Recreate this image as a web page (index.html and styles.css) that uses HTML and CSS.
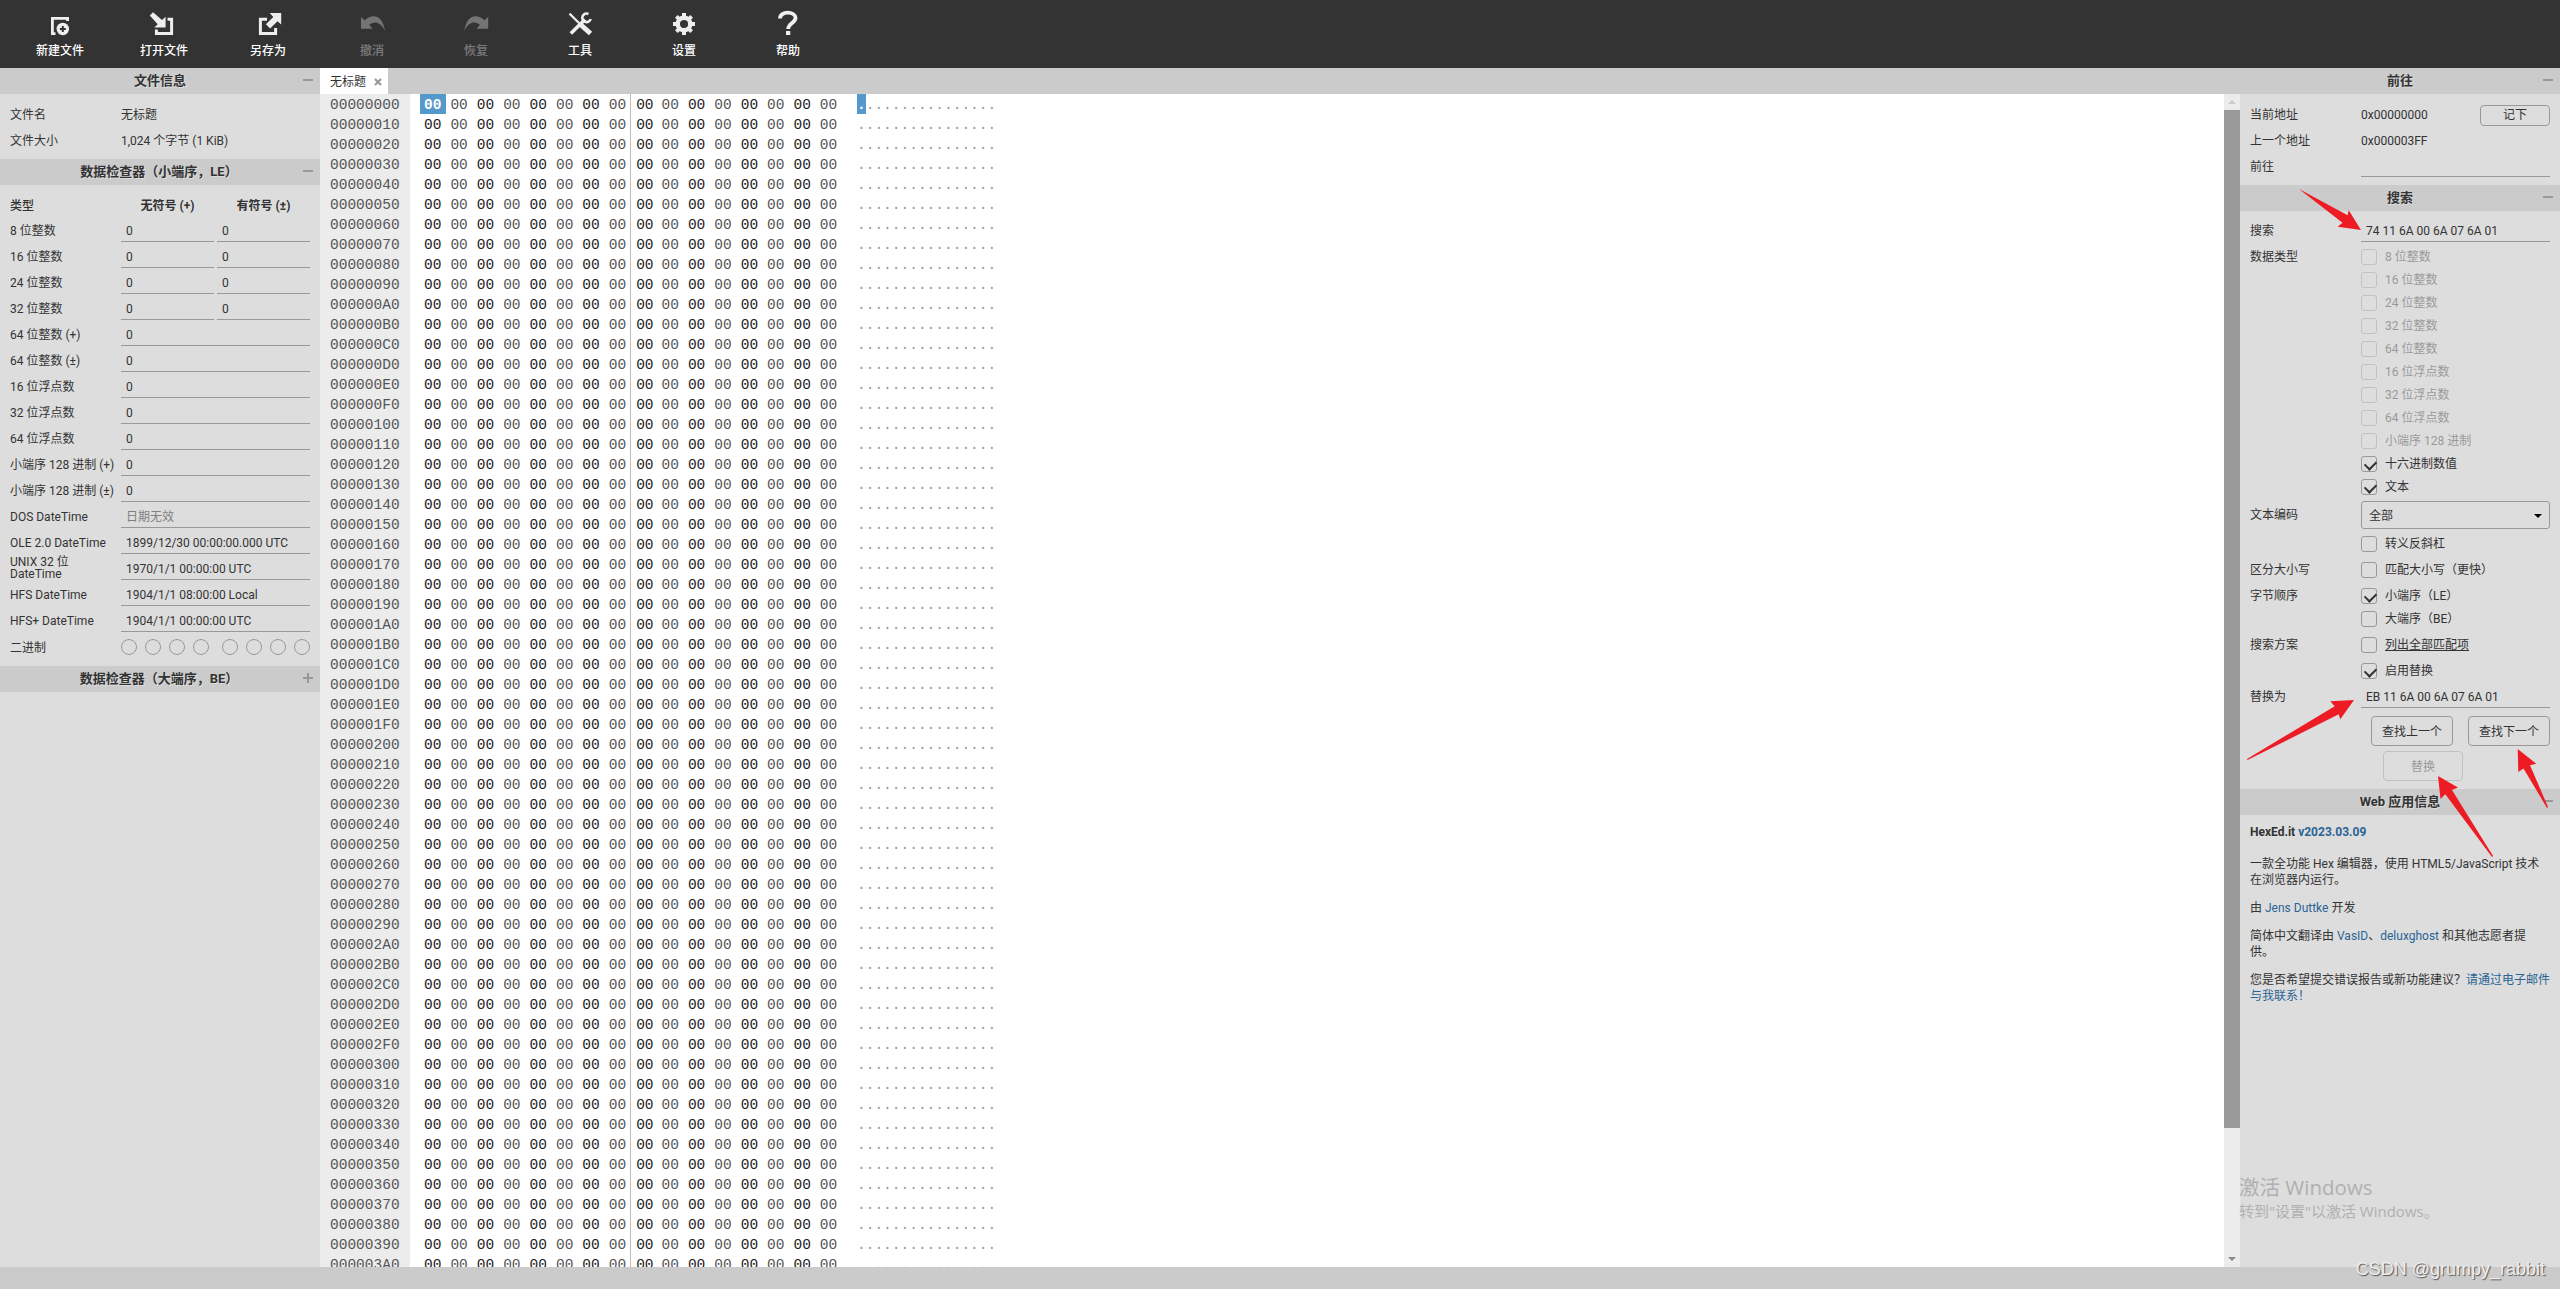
FILE: index.html
```html
<!DOCTYPE html>
<html lang="zh-CN">
    <head>
        <meta charset="UTF-8" />
        <meta name="viewport" content="width=device-width, initial-scale=1.0" />
        <title>HexEd.it</title>
        <link rel="stylesheet" href="styles.css">
    </head>
    <body>
        <div class="toolbar">
            <div class="tool">
                <svg viewBox="0 0 24 24"><path d="M7.5 21.6H4.4V6.4h15.2V9" fill="none" stroke="#eee" stroke-width="2.8"/><circle cx="14.8" cy="17" r="6.2" fill="#eee"/><path d="M14.8 14v6M11.8 17h6" stroke="#333" stroke-width="2"/></svg>
                <span>新建文件</span>
            </div>
            <div class="tool">
                <svg viewBox="0 0 24 24"><path d="M15.5 7.2h4.1v14.3H4.4V17.5" fill="none" stroke="#eee" stroke-width="3"/><path d="M-2.2 3.5 1 .3l9 7.6 3.6-3.2v10.8H2.3l3.4-3.2z" fill="#eee"/></svg>
                <span>打开文件</span>
            </div>
            <div class="tool">
                <svg viewBox="0 0 24 24"><path d="M11 7.2H4.4v14.3h15.2V16" fill="none" stroke="#eee" stroke-width="3"/><path d="M25.2 1v11.6l-3.7-3.4-7.4 7.2-4.2-4.2 7.4-7.2L13.7 1z" fill="#eee"/></svg>
                <span>另存为</span>
            </div>
            <div class="tool disabled">
                <svg viewBox="0 0 24 24"><path d="M1 5l3.7 3.3C12 1.5 22 2 25 18.7 20.5 10 15 8.5 9.3 12.7L12.5 16.7H1z" fill="#eee"/></svg>
                <span>撤消</span>
            </div>
            <div class="tool disabled">
                <svg viewBox="0 0 24 24"><path transform="translate(25.2) scale(-1 1)" d="M1 5l3.7 3.3C12 1.5 22 2 25 18.7 20.5 10 15 8.5 9.3 12.7L12.5 16.7H1z" fill="#eee"/></svg>
                <span>恢复</span>
            </div>
            <div class="tool">
                <svg viewBox="0 0 24 24"><path d="M1.5 1.6 12 12" stroke="#eee" stroke-width="2.2"/><path d="M13 13l9.5 8.5" stroke="#eee" stroke-width="5"/><path d="M2.8 21.5 17 7.5" stroke="#eee" stroke-width="3.6"/><path d="M20.5 2a4.3 4.3 0 1 0 2.2 5" fill="none" stroke="#eee" stroke-width="2.6"/></svg>
                <span>工具</span>
            </div>
            <div class="tool">
                <svg viewBox="0 0 24 24"><circle cx="12" cy="12" r="6.3" fill="none" stroke="#eee" stroke-width="4.4"/><g stroke="#eee" stroke-width="4"><path d="M12 1v3.5M12 19.5V23M1 12h3.5M19.5 12H23"/><path d="M4.4 4.4l2.3 2.3M17.3 17.3l2.3 2.3M4.4 19.6l2.3-2.3M17.3 6.7l2.3-2.3"/></g></svg>
                <span>设置</span>
            </div>
            <div class="tool">
                <svg viewBox="0 0 24 24"><path d="M4 6.5c0-8 15.5-7.5 15.5-.4 0 5-7.3 5-7.3 11" fill="none" stroke="#eee" stroke-width="3.8"/><path d="M10 19h4.3v4H10z" fill="#eee"/></svg>
                <span>帮助</span>
            </div>
        </div>

        <div class="main">
            <div class="panel left-panel">
                <div class="panel-header">文件信息<i class="toggle"></i></div>
                <div class="panel-body">
                    <div class="row"><label>文件名</label><span>无标题</span></div>
                    <div class="row"><label>文件大小</label><span>1,024 个字节 (1 KiB)</span></div>
                </div>
                <div class="panel-header inspector-header">数据检查器（小端序，LE）<i class="toggle"></i></div>
                <div class="panel-body inspector">
                    <div class="row head"><label>类型</label><b>无符号 (+)</b><b>有符号 (±)</b></div>
                    <div class="row"><label>8 位整数</label><div class="field">0</div><div class="field">0</div></div>
                    <div class="row"><label>16 位整数</label><div class="field">0</div><div class="field">0</div></div>
                    <div class="row"><label>24 位整数</label><div class="field">0</div><div class="field">0</div></div>
                    <div class="row"><label>32 位整数</label><div class="field">0</div><div class="field">0</div></div>
                    <div class="row"><label>64 位整数 (+)</label><div class="field">0</div></div>
                    <div class="row"><label>64 位整数 (±)</label><div class="field">0</div></div>
                    <div class="row"><label>16 位浮点数</label><div class="field">0</div></div>
                    <div class="row"><label>32 位浮点数</label><div class="field">0</div></div>
                    <div class="row"><label>64 位浮点数</label><div class="field">0</div></div>
                    <div class="row"><label>小端序 128 进制 (+)</label><div class="field">0</div></div>
                    <div class="row"><label>小端序 128 进制 (±)</label><div class="field">0</div></div>
                    <div class="row"><label>DOS DateTime</label><div class="field invalid">日期无效</div></div>
                    <div class="row"><label>OLE 2.0 DateTime</label><div class="field">1899/12/30 00:00:00.000 UTC</div></div>
                    <div class="row"><label class="two-lines">UNIX 32 位<br>DateTime</label><div class="field">1970/1/1 00:00:00 UTC</div></div>
                    <div class="row"><label>HFS DateTime</label><div class="field">1904/1/1 08:00:00 Local</div></div>
                    <div class="row"><label>HFS+ DateTime</label><div class="field">1904/1/1 00:00:00 UTC</div></div>
                    <div class="row bits-row"><label>二进制</label><div class="bits"><i></i><i></i><i></i><i></i><i></i><i></i><i></i><i></i></div></div>
                </div>
                <div class="panel-header inspector-header">数据检查器（大端序，BE）<i class="toggle plus"></i></div>
            </div>

            <div class="editor">
                <div class="tabs">
                    <div class="tab">无标题<svg viewBox="0 0 8 8"><path d="M1 1l6 6M7 1l-6 6" stroke="#999" stroke-width="2.2"/></svg></div>
                </div>
                <div class="editor-body">
                    <div class="hex-view">
                        <div class="addresses" id="addresses"></div>
                        <div class="bytes" id="bytes"></div>
                        <div class="ascii" id="ascii"></div>
                    </div>
                    <div class="scrollbar">
                        <div class="scroll-arrow up"></div>
                        <div class="scroll-thumb"></div>
                        <div class="scroll-arrow down"></div>
                    </div>
                </div>
            </div>

            <div class="panel right-panel">
                <div class="panel-header">前往<i class="toggle"></i></div>
                <div class="panel-body">
                    <div class="row"><label>当前地址</label><span>0x00000000</span><button class="small">记下</button></div>
                    <div class="row"><label>上一个地址</label><span>0x000003FF</span></div>
                    <div class="row goto"><label>前往</label><div class="field"></div></div>
                </div>
                <div class="panel-header">搜索<i class="toggle"></i></div>
                <div class="panel-body search">
                    <div class="row"><label>搜索</label><div class="field">74 11 6A 00 6A 07 6A 01</div></div>
                    <div class="group">
                        <label>数据类型</label>
                        <div class="checks">
                            <div class="check off"><i></i>8 位整数</div>
                            <div class="check off"><i></i>16 位整数</div>
                            <div class="check off"><i></i>24 位整数</div>
                            <div class="check off"><i></i>32 位整数</div>
                            <div class="check off"><i></i>64 位整数</div>
                            <div class="check off"><i></i>16 位浮点数</div>
                            <div class="check off"><i></i>32 位浮点数</div>
                            <div class="check off"><i></i>64 位浮点数</div>
                            <div class="check off"><i></i>小端序 128 进制</div>
                            <div class="check"><i class="checked"></i>十六进制数值</div>
                            <div class="check"><i class="checked"></i>文本</div>
                        </div>
                    </div>
                    <div class="group encoding">
                        <label>文本编码</label>
                        <div class="select">全部</div>
                    </div>
                    <div class="group">
                        <label></label>
                        <div class="checks"><div class="check"><i></i>转义反斜杠</div></div>
                    </div>
                    <div class="group">
                        <label>区分大小写</label>
                        <div class="checks"><div class="check"><i></i>匹配大小写（更快）</div></div>
                    </div>
                    <div class="group">
                        <label>字节顺序</label>
                        <div class="checks">
                            <div class="check"><i class="checked"></i>小端序（LE）</div>
                            <div class="check"><i></i>大端序（BE）</div>
                        </div>
                    </div>
                    <div class="group">
                        <label>搜索方案</label>
                        <div class="checks"><div class="check"><i></i><u>列出全部匹配项</u></div></div>
                    </div>
                    <div class="group">
                        <label></label>
                        <div class="checks"><div class="check"><i class="checked"></i>启用替换</div></div>
                    </div>
                    <div class="row replace-row"><label>替换为</label><div class="field">EB 11 6A 00 6A 07 6A 01</div></div>
                    <div class="buttons">
                        <button>查找上一个</button>
                        <button>查找下一个</button>
                    </div>
                    <div class="buttons replace"><button disabled>替换</button></div>
                </div>
                <div class="panel-header">Web 应用信息<i class="toggle"></i></div>
                <div class="about">
                    <p class="version">HexEd.it <a>v2023.03.09</a></p>
                    <p>一款全功能 Hex 编辑器，使用 HTML5/JavaScript 技术<br>在浏览器内运行。</p>
                    <p>由 <a>Jens Duttke</a> 开发</p>
                    <p>简体中文翻译由 <a>VasID</a>、<a>deluxghost</a> 和其他志愿者提<br>供。</p>
                    <p>您是否希望提交错误报告或新功能建议？<a>请通过电子邮件<br>与我联系！</a></p>
                </div>
            </div>
        </div>
        <div class="status-bar"></div>

        <svg class="arrows" viewBox="2240 180 320 690">
            <path d="M2299 189 2347.6 215.3 2348.7 210.3 2361 230 2337.7 226.7 2342.5 222.7z"/>
            <path d="M2247 759 2247.5 760 2338.7 714.3 2340.3 719.3 2354 700 2330.3 701.3 2334.7 706.3z"/>
            <path d="M2438 776 2458 787.5 2452 790 2493 856 2492 857 2445.3 794.2 2440.5 799z"/>
            <path d="M2517.7 749 2536.3 763.7 2530 765.3 2548 807 2547 808 2523.5 768.5 2518.3 772z"/>
        </svg>
        <div class="activate">
            <div>激活 Windows</div>
            <small>转到"设置"以激活 Windows。</small>
        </div>
        <div class="watermark">CSDN @grumpy_rabbit</div>
        <script src="script.js"></script>
    </body>
</html>
```

FILE: styles.css
```css
:root {
    --bar-color: #333;
    --header-color: #cbcbcb;
    --panel-color: #ddd;
    --text-color: #333;
    --line-color: #999;
    --link-color: #2a6496;
    --select-color: #5599cc;
}

* {
    box-sizing: border-box;
}

body {
    margin: 0;
    height: 1289px;
    display: flex;
    flex-direction: column;
    overflow: hidden;
    font-family: Roboto, "Noto Sans CJK SC", sans-serif;
    font-size: 12px;
    line-height: 16px;
    color: var(--text-color);
    background-color: var(--panel-color);
}

a {
    color: var(--link-color);
}

.toolbar {
    flex: none;
    height: 68px;
    padding-left: 8px;
    display: flex;
    background-color: var(--bar-color);
}

.tool {
    width: 104px;
    padding-top: 12px;
    display: flex;
    flex-direction: column;
    align-items: center;
    gap: 7px;
    color: white;
    font-weight: 500;
}

.tool svg {
    width: 24px;
    height: 24px;
    overflow: visible;
}

.tool.disabled {
    opacity: 0.35;
}

.main {
    height: 1199px;
    display: flex;
}

.panel {
    width: 320px;
    flex: none;
}

.panel-header {
    position: relative;
    height: 26px;
    line-height: 25px;
    text-align: center;
    font-size: 13px;
    font-weight: bold;
    background-color: var(--header-color);
    text-shadow: 1px 1px 0 #ddd;
}

.inspector-header {
    padding-right: 2px;
}

.toggle {
    position: absolute;
    right: 7px;
    top: 11px;
    width: 10px;
    height: 2px;
    background-color: var(--line-color);
}

.toggle.plus::after {
    content: "";
    position: absolute;
    left: 4px;
    top: -4px;
    width: 2px;
    height: 10px;
    background-color: var(--line-color);
}

.panel-body {
    padding: 8px 10px 5px;
}

.row {
    height: 26px;
    display: flex;
    align-items: center;
    gap: 3px;
}

.row label,
.group label {
    width: 108px;
    flex: none;
    white-space: nowrap;
}

.row b {
    flex: 1;
    text-align: center;
}

.field {
    flex: 1;
    height: 26px;
    padding: 0 5px;
    line-height: 26px;
    border-bottom: 1px solid var(--line-color);
}

.field.invalid {
    color: #808080;
}

.inspector .field,
.search .field {
    padding-top: 2px;
}

.inspector label,
.search .row label {
    padding-top: 3px;
}

.inspector label.two-lines {
    line-height: 12px;
    padding-top: 2px;
}

.inspector .head {
    height: 23px;
    padding-top: 2px;
}

.inspector .head label {
    font-weight: 500;
    padding-top: 0;
}

.inspector .bits-row {
    height: 29px;
}

.bits {
    flex: 1;
    display: flex;
    gap: 8px;
}

.bits i {
    width: 16px;
    height: 16px;
    border: 1px solid var(--line-color);
    border-radius: 50%;
}

.bits i:nth-child(5) {
    margin-left: 5px;
}

.editor {
    flex: 1;
    display: flex;
    flex-direction: column;
    min-width: 0;
}

.tabs {
    height: 26px;
    flex: none;
    background-color: var(--header-color);
}

.tab {
    width: 68px;
    height: 26px;
    padding: 1px 0 0 10px;
    display: flex;
    align-items: center;
    gap: 8px;
    background-color: white;
}

.tab svg {
    width: 8px;
    height: 8px;
}

.editor-body {
    flex: 1;
    display: flex;
    min-height: 0;
    background-color: white;
}

.hex-view {
    flex: 1;
    display: flex;
    overflow: hidden;
    font-family: "Liberation Mono", monospace;
    font-size: 14.5px;
    line-height: 22px;
}

.addresses {
    width: 90px;
    padding-left: 10px;
    flex: none;
    color: #555;
    background-color: #ececec;
}

.addresses div,
.ascii div {
    height: 20px;
}

.bytes {
    margin-left: 10px;
    width: 423px;
}

.byte-row {
    height: 20px;
    display: grid;
    grid-template-columns: repeat(16, 26.4px);
    grid-template-rows: 20px;
}

.byte-row span {
    padding-left: 4px;
    color: #222;
}

.byte-row span:nth-child(even) {
    color: #555;
}

.byte-row span:nth-child(9) {
    border-left: 1px solid #bbb;
    margin-left: -1px;
    padding-left: 5px;
}

.byte-row span.selected {
    width: 26px;
    color: white;
    font-weight: bold;
    background-color: var(--select-color);
}

.ascii {
    margin-left: 14px;
    color: #999;
    white-space: pre;
}

.ascii .selected {
    display: inline-block;
    height: 20px;
    vertical-align: top;
    color: white;
    font-weight: bold;
    background-color: var(--select-color);
}

.scrollbar {
    width: 16px;
    display: flex;
    flex-direction: column;
    background-color: #ececec;
}

.scroll-thumb {
    height: 1018px;
    background-color: #999;
}

.scroll-arrow {
    height: 16px;
    padding: 6px 4px 0;
}

.scroll-arrow::before {
    content: "";
    display: block;
    border: 4px solid transparent;
    border-top-width: 0;
    border-bottom-color: #ccc;
}

.scroll-arrow.down {
    margin-top: auto;
}

.scroll-arrow.down::before {
    border-top: 4px solid #888;
    border-bottom-width: 0;
}

.right-panel .row span {
    flex: 1;
}

.goto .field {
    align-self: flex-start;
    height: 23px;
}

button {
    width: 82px;
    height: 30px;
    padding: 1px 0 0;
    font: inherit;
    color: inherit;
    background: none;
    border: 1px solid var(--line-color);
    border-radius: 4px;
}

button.small {
    width: 70px;
    height: 21px;
    padding: 0;
}

button:disabled {
    width: 80px;
    opacity: 0.4;
}

.search {
    padding: 5px 10px 8px;
}

.group {
    display: flex;
    align-items: flex-start;
    gap: 3px;
    margin-top: 10px;
}

.search .row + .group {
    margin-top: 7px;
}

.checks {
    display: flex;
    flex-direction: column;
    gap: 7px;
}

.check {
    height: 16px;
    display: flex;
    gap: 8px;
    white-space: nowrap;
}

.check i {
    width: 16px;
    height: 16px;
    border: 1px solid var(--line-color);
    border-radius: 3px;
}

.check i.checked::after {
    content: "";
    display: block;
    width: 9px;
    height: 6px;
    margin: 3px 0 0 2.5px;
    border: solid var(--text-color);
    border-width: 0 0 2.5px 2.5px;
    transform: rotate(-45deg);
}

.check.off {
    opacity: 0.4;
}

.encoding {
    align-items: center;
    margin: 6px 0 -3px;
}

.select {
    flex: 1;
    height: 28px;
    padding: 1px 7px 0;
    display: flex;
    align-items: center;
    justify-content: space-between;
    border: 1px solid var(--line-color);
    border-radius: 3px;
}

.select::after {
    content: "";
    border: 4px solid transparent;
    border-top-color: black;
    border-bottom-width: 0;
}

.replace-row {
    margin-top: 3px;
}

.buttons {
    display: flex;
    justify-content: flex-end;
    gap: 15px;
    margin-top: 8px;
}

.buttons.replace {
    margin: 5px 87px 0 0;
}

.about {
    padding: 9px 0 0 10px;
    white-space: nowrap;
}

.about p {
    margin: 0 0 12px;
}

.about .version {
    font-weight: bold;
    margin-bottom: 16px;
}

.status-bar {
    height: 22px;
    background-color: var(--header-color);
}

/* annotations lie over the panels */
.arrows {
    position: absolute;
    left: 2240px;
    top: 180px;
    width: 320px;
    height: 690px;
    fill: #ed1c24;
}

.activate {
    position: absolute;
    left: 2239px;
    top: 1174px;
    font-family: "Open Sans", "Noto Sans CJK SC", sans-serif;
    font-size: 20.5px;
    line-height: 27px;
    color: #b0b0b0;
}

.activate small {
    display: block;
    font-size: 15px;
    line-height: 20px;
}

.watermark {
    position: absolute;
    right: 15px;
    top: 1257px;
    font-family: "Liberation Sans", sans-serif;
    font-size: 18px;
    line-height: 24px;
    color: #eee;
    text-shadow: 1px 1px 1px #555;
}
```

FILE: script.js
```js
const ROWS = 59;
const addresses = document.getElementById('addresses');
const bytes = document.getElementById('bytes');
const ascii = document.getElementById('ascii');

for (let r = 0; r < ROWS; r++) {
    const address = document.createElement('div');
    address.textContent = (r * 16).toString(16).toUpperCase().padStart(8, '0');
    addresses.appendChild(address);

    const row = document.createElement('div');
    row.className = 'byte-row';
    row.innerHTML = '<span>00</span>'.repeat(16);
    bytes.appendChild(row);

    const chars = document.createElement('div');
    chars.textContent = '.'.repeat(16);
    ascii.appendChild(chars);
}

// cursor on the first byte
bytes.querySelector('span').className = 'selected';
ascii.firstChild.innerHTML = '<span class="selected">.</span>' + '.'.repeat(15);
```
